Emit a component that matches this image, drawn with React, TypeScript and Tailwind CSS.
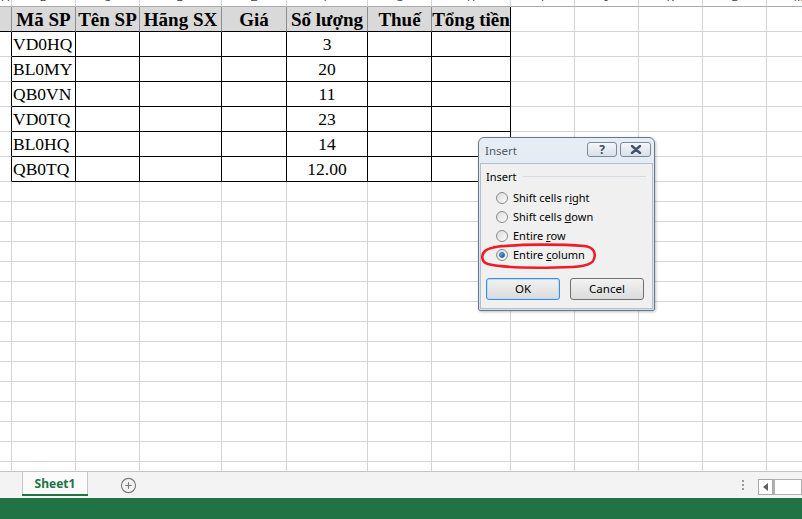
import React from "react";
import { CirclePlus } from "lucide-react";

const widths = [
  "w-[12px]",
  "w-[64px]",
  "w-[64px]",
  "w-[82px]",
  "w-[65px]",
  "w-[81px]",
  "w-[64px]",
  "w-[79px]",
  "w-[64px]",
  "w-[64px]",
  "w-[64px]",
  "w-[64px]",
  "w-[64px]",
];
const letters = ["A", "B", "C", "D", "E", "F", "G", "H", "I", "J", "K", "L", "M"];
const headers = ["", "Mã SP", "Tên SP", "Hãng SX", "Giá", "Số lượng", "Thuế", "Tổng tiền"];
const data: [string, string][] = [
  ["VD0HQ", "3"],
  ["BL0MY", "20"],
  ["QB0VN", "11"],
  ["VD0TQ", "23"],
  ["BL0HQ", "14"],
  ["QB0TQ", "12.00"],
];

const serif = "font-['Liberation_Serif','Times_New_Roman',serif]";

function ColumnHeaderRow() {
  return (
    <div className="flex h-[7px] shrink-0">
      {widths.map((w, i) => (
        <div
          key={i}
          className={`${w} shrink-0 box-border h-full border-r border-b border-r-[#d4d4d4] border-b-[#ababab] overflow-hidden flex justify-center`}
        >
          <span className="relative top-[-9px] text-[11px] leading-[13px] text-[#444] font-['Liberation_Sans',sans-serif]">
            {letters[i]}
          </span>
        </div>
      ))}
    </div>
  );
}

function HeaderRow() {
  return (
    <div className="flex h-[25px] shrink-0">
      {widths.map((w, i) => {
        if (i === 0)
          return (
            <div
              key={i}
              className={`${w} shrink-0 box-border h-full bg-[#d9d9d9] border-r border-b border-r-[#8c8c8c] border-b-black`}
            />
          );
        if (i <= 7)
          return (
            <div
              key={i}
              className={`${w} shrink-0 box-border h-full bg-[#d9d9d9] border-r border-b ${
                i === 7 ? "border-r-black" : "border-r-[#8c8c8c]"
              } border-b-black flex items-center justify-center overflow-visible`}
            >
              <span
                className={`${serif} font-bold text-[19px] leading-none whitespace-nowrap text-black`}
              >
                {headers[i]}
              </span>
            </div>
          );
        return (
          <div
            key={i}
            className={`${w} shrink-0 box-border h-full border-r border-b border-[#d4d4d4]`}
          />
        );
      })}
    </div>
  );
}

function BodyRow({ code, qty }: { code: string; qty: string }) {
  return (
    <div className="flex h-[25px] shrink-0">
      {widths.map((w, i) => {
        if (i === 0)
          return (
            <div
              key={i}
              className={`${w} shrink-0 box-border h-full border-r border-b border-r-black border-b-[#d4d4d4]`}
            />
          );
        if (i <= 7)
          return (
            <div
              key={i}
              className={`${w} shrink-0 box-border h-full border-r border-b border-black flex items-center pt-[1px] ${
                i === 5 ? "justify-center" : "justify-start pl-[1px]"
              }`}
            >
              {i === 1 && (
                <span className={`${serif} text-[17.5px] leading-none text-black whitespace-nowrap`}>
                  {code}
                </span>
              )}
              {i === 5 && (
                <span className={`${serif} text-[17.5px] leading-none text-black whitespace-nowrap`}>
                  {qty}
                </span>
              )}
            </div>
          );
        return (
          <div
            key={i}
            className={`${w} shrink-0 box-border h-full border-r border-b border-[#d4d4d4]`}
          />
        );
      })}
    </div>
  );
}

function EmptyRow() {
  return (
    <div className="flex h-[20px] shrink-0">
      {widths.map((w, i) => (
        <div key={i} className={`${w} shrink-0 box-border h-full border-r border-b border-[#d4d4d4]`} />
      ))}
    </div>
  );
}

function Radio({ checked }: { checked?: boolean }) {
  return (
    <div className="w-[12px] h-[12px] rounded-full border border-[#8a8a8a] bg-gradient-to-br from-[#dcdcdc] to-[#fbfbfb] flex items-center justify-center shrink-0">
      {checked && (
        <div className="w-[6px] h-[6px] rounded-full bg-gradient-to-br from-[#7fc4f0] to-[#0f4d8c] border border-[#2a6aa8]" />
      )}
    </div>
  );
}

function RadioRow({ checked, children }: { checked?: boolean; children: React.ReactNode }) {
  return (
    <div className="h-[19px] flex items-center pl-[11px] gap-[5px]">
      <Radio checked={checked} />
      <span className="text-[11px] leading-none text-black whitespace-nowrap">{children}</span>
    </div>
  );
}

function Dialog() {
  return (
    <div className="absolute left-[478px] top-[137px] w-[177px] h-[174px] box-border border border-[#6a7789] rounded-t-[6px] rounded-b-[2px] bg-gradient-to-b from-[#e6edf5] to-[#d6e1ec] flex flex-col font-['Noto_Sans','Open_Sans',sans-serif] shadow-[1px_1px_3px_rgba(0,0,0,0.25)]">
      <div className="h-[25px] flex items-center justify-between pl-[6px] pr-[3px] shrink-0">
        <span className="text-[11.5px] text-[#4d5b6b] leading-none">Insert</span>
        <div className="flex gap-[3px] items-center mt-[-2px]">
          <div className="w-[30px] h-[15px] box-border border border-[#7f8a98] rounded-[3px] bg-gradient-to-b from-[#f4f7fb] to-[#d7e0ea] flex items-center justify-center">
            <span className="text-[12px] font-bold leading-none text-[#3e4d60]">?</span>
          </div>
          <div className="w-[31px] h-[15px] box-border border border-[#7f8a98] rounded-[3px] bg-gradient-to-b from-[#f4f7fb] to-[#d7e0ea] flex items-center justify-center">
            <svg width="12" height="9" viewBox="0 0 12 9">
              <path d="M2 1 L10 8 M10 1 L2 8" stroke="#44536a" strokeWidth="2.4" strokeLinecap="round" />
            </svg>
          </div>
        </div>
      </div>
      <div className="flex-1 mx-[1px] mb-[1px] box-border border border-[#b4bfcc] bg-[#f0f0f0] flex flex-col px-[4px]">
        <div className="h-[16px] mt-[4px] flex items-center gap-[6px] pl-[1px]">
          <span className="text-[11px] leading-none text-black">Insert</span>
          <div className="flex-1 h-px bg-[#d5dbe3] mr-[2px]" />
        </div>
        <div className="mt-[4px] flex flex-col">
          <RadioRow>
            Shift cells r<span className="underline">i</span>ght
          </RadioRow>
          <RadioRow>
            Shift cells <span className="underline">d</span>own
          </RadioRow>
          <RadioRow>
            Entire <span className="underline">r</span>ow
          </RadioRow>
          <RadioRow checked>
            Entire <span className="underline">c</span>olumn
          </RadioRow>
        </div>
        <div className="mt-[14px] flex gap-[10px] pl-[1px]">
          <div className="w-[74px] h-[22px] box-border border border-[#3d8ee0] rounded-[3px] bg-gradient-to-b from-[#f2f2f2] to-[#dcdcdc] flex items-center justify-center shadow-[inset_0_0_0_1px_#b8dcf8]">
            <span className="text-[11.5px] leading-none text-black">OK</span>
          </div>
          <div className="w-[74px] h-[22px] box-border border border-[#707070] rounded-[3px] bg-gradient-to-b from-[#f2f2f2] to-[#dcdcdc] flex items-center justify-center">
            <span className="text-[11.5px] leading-none text-black">Cancel</span>
          </div>
        </div>
      </div>
    </div>
  );
}

export default function App() {
  return (
    <div className="relative w-[802px] h-[519px] overflow-hidden bg-white flex flex-col">
      <div className="h-[471px] overflow-hidden flex flex-col shrink-0">
        <ColumnHeaderRow />
        <HeaderRow />
        {data.map(([c, q]) => (
          <BodyRow key={c} code={c} qty={q} />
        ))}
        {Array.from({ length: 15 }).map((_, i) => (
          <EmptyRow key={i} />
        ))}
      </div>
      <div className="h-[27px] shrink-0 box-border border-t border-[#c6c6c6] bg-[#f3f3f3] flex items-start relative">
        <div className="ml-[22px] w-[66px] h-[24px] box-border border-x border-[#c6c6c6] bg-[#fbfbfb] flex items-center justify-center relative">
          <span className="font-['Noto_Sans','Open_Sans',sans-serif] font-bold text-[12px] leading-none text-[#217346]">
            Sheet1
          </span>
          <div className="absolute left-[-1px] right-[-1px] bottom-0 h-[2px] bg-[#217346]" />
        </div>
        <div className="ml-[32px] mt-[5px] text-[#7a7a7a]">
          <CirclePlus size={17} strokeWidth={1.6} />
        </div>
        <div className="ml-auto flex items-start mt-[7px]">
          <div className="flex flex-col gap-[2px] mr-[14px] mt-[1px]">
            <div className="w-[2px] h-[2px] bg-[#9a9a9a]" />
            <div className="w-[2px] h-[2px] bg-[#9a9a9a]" />
            <div className="w-[2px] h-[2px] bg-[#9a9a9a]" />
          </div>
          <div className="w-[15px] h-[16px] box-border border border-[#a8a8a8] bg-white flex items-center justify-center">
            <svg width="6" height="8" viewBox="0 0 6 8">
              <path d="M5 0 L0 4 L5 8 Z" fill="#606060" />
            </svg>
          </div>
          <div className="w-[29px] h-[16px] box-border border border-l-2 border-[#b0b0b0] bg-white" />
        </div>
      </div>
      <div className="h-[21px] shrink-0 bg-[#217346]" />
      <Dialog />
      <svg
        className="absolute left-[480px] top-[243px]"
        width="118"
        height="28"
        viewBox="0 0 118 28"
      >
        <path
          d="M14 4 C40 1, 80 1, 104 3 C114 4, 116 10, 114 16 C112 23, 100 24, 75 24.5 C50 25, 20 24, 8 21 C1 19, 1 12, 5 8 C8 5, 14 4, 22 3"
          fill="none"
          stroke="#ee1c25"
          strokeWidth="2.6"
          strokeLinecap="round"
        />
      </svg>
    </div>
  );
}
